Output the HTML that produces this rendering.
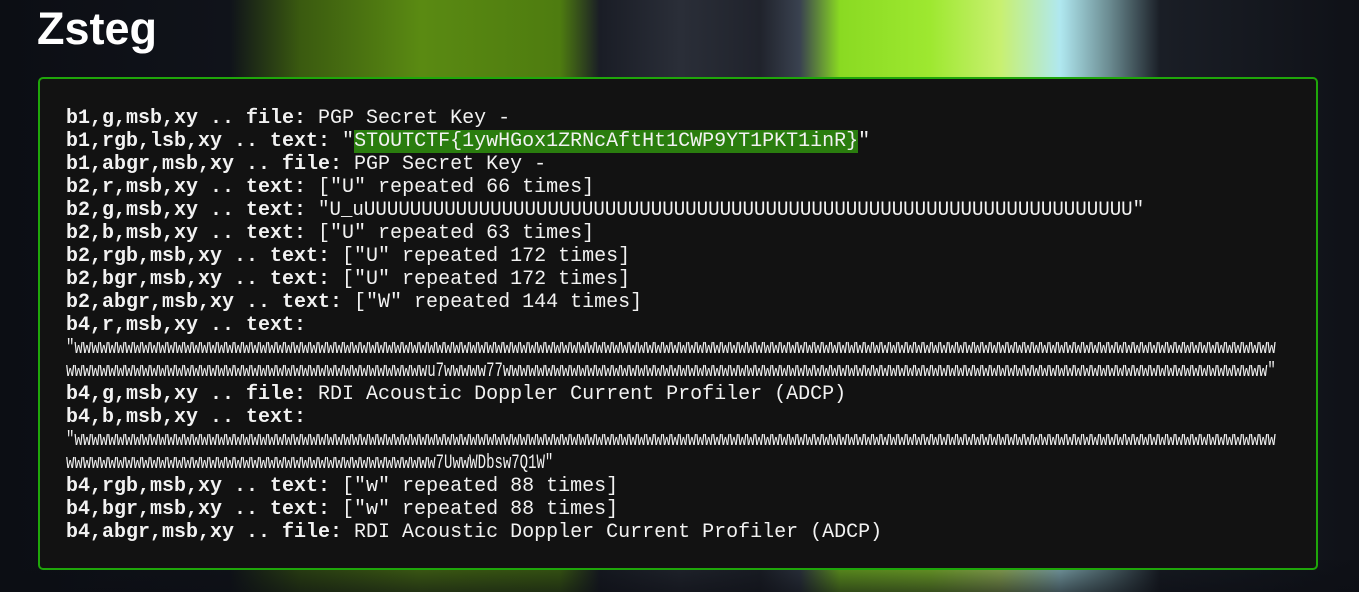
<!DOCTYPE html>
<html><head><meta charset="utf-8"><style>
html,body{margin:0;padding:0;width:1359px;height:592px;overflow:hidden;background:#0d0f14;}
.bg{position:absolute;inset:0;background:
linear-gradient(90deg,#0c0e14 0px,#10131a 230px,#3a5a10 300px,#5a8a12 420px,#4e7c10 560px,#1a1d26 600px,#2a2e38 680px,#20232c 760px,#3a4250 800px,#8ada22 840px,#9ee830 930px,#c8f070 1000px,#b0e8f0 1060px,#6a8a90 1110px,#1a1e26 1160px,#0f1117 1359px);}
.bg3{position:absolute;left:0;right:0;top:560px;bottom:0;background:linear-gradient(180deg,rgba(12,14,20,0.3),rgba(12,14,20,0.7));}
h1{position:absolute;left:37px;top:3px;margin:0;font:bold 45px "Liberation Sans",sans-serif;color:#fff;letter-spacing:0px;}
.box{position:absolute;left:38px;top:77px;width:1276px;height:489px;border:2px solid #1fa60a;border-radius:5px;background:#121212;}
.c{position:absolute;left:26px;top:28px;font:20px/23px "Liberation Mono",monospace;color:#f2f2f2;white-space:pre;}
b{font-weight:bold;}
.hl{background:#2a7d0e;}
.sq{display:inline-block;transform-origin:0 0;white-space:pre;}
</style></head><body>
<div class="bg"></div>
<div class="bg3"></div>
<h1>Zsteg</h1>
<div class="box"><div class="c"><b>b1,g,msb,xy .. file:</b> PGP Secret Key -
<b>b1,rgb,lsb,xy .. text:</b> "<span class="hl">STOUTCTF{1ywHGox1ZRNcAftHt1CWP9YT1PKT1inR}</span>"
<b>b1,abgr,msb,xy .. file:</b> PGP Secret Key -
<b>b2,r,msb,xy .. text:</b> ["U" repeated 66 times]
<b>b2,g,msb,xy .. text:</b> <span class="sq" style="transform:scaleX(0.956)">"U_uUUUUUUUUUUUUUUUUUUUUUUUUUUUUUUUUUUUUUUUUUUUUUUUUUUUUUUUUUUUUUUUUUUU"</span>
<b>b2,b,msb,xy .. text:</b> ["U" repeated 63 times]
<b>b2,rgb,msb,xy .. text:</b> ["U" repeated 172 times]
<b>b2,bgr,msb,xy .. text:</b> ["U" repeated 172 times]
<b>b2,abgr,msb,xy .. text:</b> ["W" repeated 144 times]
<b>b4,r,msb,xy .. text:</b>
<span class="sq" style="transform:scaleX(0.70)">"wwwwwwwwwwwwwwwwwwwwwwwwwwwwwwwwwwwwwwwwwwwwwwwwwwwwwwwwwwwwwwwwwwwwwwwwwwwwwwwwwwwwwwwwwwwwwwwwwwwwwwwwwwwwwwwwwwwwwwwwwwwwwwwwwwwwwwwwwwwwwww</span>
<span class="sq" style="transform:scaleX(0.70)">wwwwwwwwwwwwwwwwwwwwwwwwwwwwwwwwwwwwwwwwwwwu7wwwww77wwwwwwwwwwwwwwwwwwwwwwwwwwwwwwwwwwwwwwwwwwwwwwwwwwwwwwwwwwwwwwwwwwwwwwwwwwwwwwwwwwwwwwwwwww"</span>
<b>b4,g,msb,xy .. file:</b> RDI Acoustic Doppler Current Profiler (ADCP)
<b>b4,b,msb,xy .. text:</b>
<span class="sq" style="transform:scaleX(0.70)">"wwwwwwwwwwwwwwwwwwwwwwwwwwwwwwwwwwwwwwwwwwwwwwwwwwwwwwwwwwwwwwwwwwwwwwwwwwwwwwwwwwwwwwwwwwwwwwwwwwwwwwwwwwwwwwwwwwwwwwwwwwwwwwwwwwwwwwwwwwwwwww</span>
<span class="sq" style="transform:scaleX(0.70)">wwwwwwwwwwwwwwwwwwwwwwwwwwwwwwwwwwwwwwwwwwww7UwwWDbsw7Q1W"</span>
<b>b4,rgb,msb,xy .. text:</b> ["w" repeated 88 times]
<b>b4,bgr,msb,xy .. text:</b> ["w" repeated 88 times]
<b>b4,abgr,msb,xy .. file:</b> RDI Acoustic Doppler Current Profiler (ADCP)</div></div>
</body></html>
